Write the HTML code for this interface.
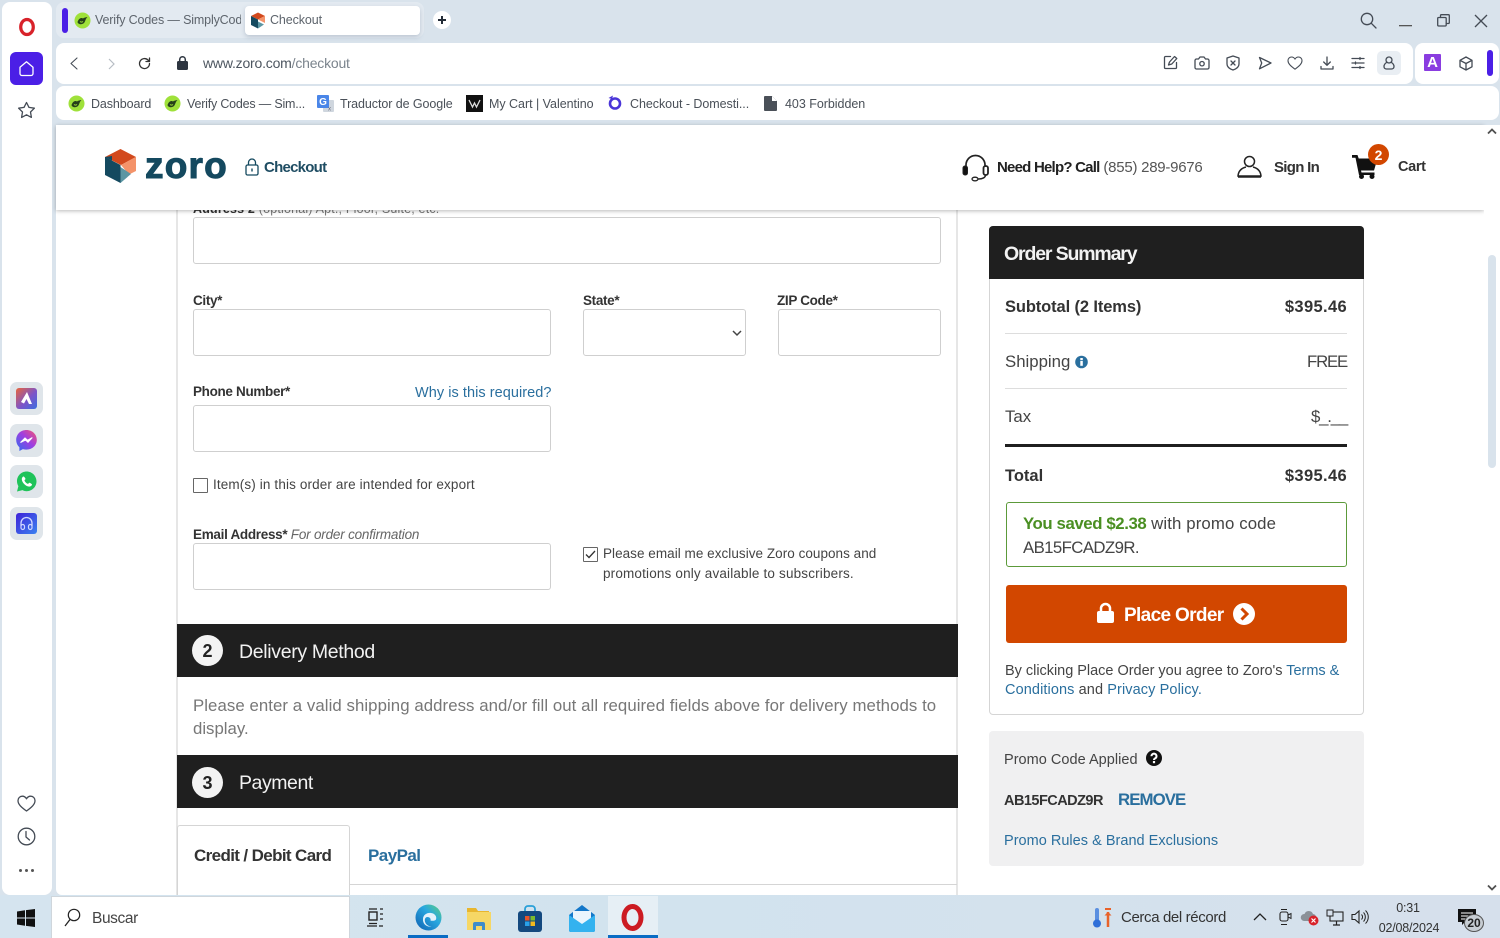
<!DOCTYPE html>
<html lang="en"><head><meta charset="utf-8"><title>Checkout</title>
<style>
*{box-sizing:border-box}
html,body{margin:0;padding:0;width:1500px;height:938px;overflow:hidden;background:#d9e3ec;font-family:"Liberation Sans",sans-serif;color:#333}
.a{position:absolute}
.t{position:absolute;white-space:nowrap;line-height:20px;height:20px}
svg{position:absolute;overflow:visible}
.b{font-weight:bold}
.in{position:absolute;background:#fff;border:1px solid #cfcfcf;border-radius:3px}
.lk{color:#2a6f9e}
.ic{fill:none;stroke:#444b55;stroke-width:1.3;stroke-linecap:round;stroke-linejoin:round}
.ch{font-size:12.5px;color:#5d646c;letter-spacing:-.1px}
.bk{font-size:12.5px;color:#4a5058;letter-spacing:-.1px}
.lb{font-size:13.5px;font-weight:bold;color:#333;letter-spacing:-.33px}
</style></head><body>

<!-- Opera sidebar -->
<div class="a" style="left:2px;top:2px;width:50px;height:893px;background:#fff;border-radius:8px"></div>
<svg style="left:17px;top:17px" width="20" height="20" viewBox="0 0 20 20"><ellipse cx="10" cy="10" rx="6.3" ry="7.5" fill="none" stroke="#d8222a" stroke-width="3.2"/></svg>
<div class="a" style="left:10px;top:52px;width:33px;height:33px;background:#4b1fe6;border-radius:6px"></div>
<svg style="left:18px;top:60px" width="17" height="17" viewBox="0 0 17 17"><path d="M2 7.2 8.5 1.8 15 7.2V13.5a2 2 0 0 1-2 2H4a2 2 0 0 1-2-2Z" fill="none" stroke="#fff" stroke-width="1.3" stroke-linejoin="round"/></svg>
<svg style="left:17px;top:101px" width="19" height="18" viewBox="0 0 19 18"><path class="ic" d="M9.5 1.5 12 6.4l5.4.8-3.9 3.8.9 5.4-4.9-2.6-4.9 2.6.9-5.4L1.6 7.2 7 6.4Z"/></svg>

<div class="a" style="left:10px;top:382px;width:33px;height:33px;background:#dfe5ea;border-radius:7px"></div>
<svg style="left:16px;top:388px" width="21" height="21" viewBox="0 0 21 21"><defs><linearGradient id="g1" x1="0" y1="0" x2="1" y2="1"><stop offset="0" stop-color="#e9653b"/><stop offset=".55" stop-color="#7d54c8"/><stop offset="1" stop-color="#3c6fe0"/></linearGradient></defs><rect width="21" height="21" rx="3" fill="url(#g1)"/><path d="M11 4 16 16h-3L10.500 11 8 15.500 5 14Z" fill="#fff"/></svg>
<div class="a" style="left:10px;top:424px;width:33px;height:33px;background:#dfe5ea;border-radius:7px"></div>
<svg style="left:16px;top:430px" width="21" height="21" viewBox="0 0 21 21"><defs><linearGradient id="g2" x1="0" y1="1" x2="1" y2="0"><stop offset="0" stop-color="#2e6df0"/><stop offset=".55" stop-color="#a13ee0"/><stop offset="1" stop-color="#f5566e"/></linearGradient></defs><path d="M10.500 0C4.700 0 .2 4.200.2 9.900c0 3 1.200 5.500 3.200 7.300V21l3.500-1.900c1.100.3 2.300.5 3.600.5 5.800 0 10.300-4.200 10.300-9.700S16.300 0 10.500 0Z" fill="url(#g2)"/><path d="M4.500 12.500 9 8l2.500 2.300L16.300 7.500 12 12.300 9.500 10Z" fill="#fff" stroke="#fff"/></svg>
<div class="a" style="left:10px;top:465px;width:33px;height:33px;background:#dfe5ea;border-radius:7px"></div>
<svg style="left:16px;top:471px" width="21" height="21" viewBox="0 0 21 21"><path d="M10.700.5C5.300.5 1 4.800 1 10.100c0 1.800.5 3.500 1.400 5L1 20.500l5.500-1.400c1.300.8 2.800 1.100 4.200 1.100 5.400 0 9.800-4.400 9.800-9.800S16.100.5 10.700.5Z" fill="#1fc35a"/><path d="M7.500 5.500c-.5 0-1.700 1-1.700 2.800 0 3 3.800 7.300 7.500 7.300 1.500 0 2.700-1.200 2.700-2.100 0-.5-2.200-1.700-2.600-1.700-.4 0-.9 1.100-1.400 1.100-1 0-3.500-2.300-3.500-3.500 0-.5 1-1 1-1.400 0-.5-1.200-2.500-2-2.500Z" fill="#fff"/></svg>
<div class="a" style="left:10px;top:507px;width:33px;height:33px;background:#dfe5ea;border-radius:7px"></div>
<svg style="left:16px;top:513px" width="21" height="21" viewBox="0 0 21 21"><defs><linearGradient id="g3" x1="0" y1="0" x2="1" y2="1"><stop offset="0" stop-color="#3f22d8"/><stop offset="1" stop-color="#3a82f0"/></linearGradient></defs><rect width="21" height="21" rx="3" fill="url(#g3)"/><path d="M5 13V10a5.500 5.500 0 0 1 11 0v3" fill="none" stroke="#cfd6ff" stroke-width="1.300"/><rect x="5" y="11.500" width="3.500" height="5" rx="1.700" fill="none" stroke="#cfd6ff" stroke-width="1.200"/><rect x="12.500" y="11.500" width="3.500" height="5" rx="1.700" fill="none" stroke="#cfd6ff" stroke-width="1.200"/></svg>

<svg style="left:17px;top:795px" width="19" height="17" viewBox="0 0 19 17"><path class="ic" d="M9.500 16C4 12 1 9.200 1 5.600 1 3 3 1.200 5.300 1.200c1.800 0 3.300 1 4.200 2.600C10.400 2.200 11.900 1.200 13.700 1.200 16 1.200 18 3 18 5.600 18 9.200 15 12 9.500 16Z"/></svg>
<svg style="left:17px;top:827px" width="19" height="19" viewBox="0 0 19 19"><circle class="ic" cx="9.500" cy="9.500" r="8.300"/><path class="ic" d="M9 4.500V10l3.500 3"/></svg>
<div class="a" style="left:19px;top:869px;width:3px;height:3px;background:#555;border-radius:50%"></div>
<div class="a" style="left:25px;top:869px;width:3px;height:3px;background:#555;border-radius:50%"></div>
<div class="a" style="left:31px;top:869px;width:3px;height:3px;background:#555;border-radius:50%"></div>

<!-- Tabs -->
<div class="a" style="left:56px;top:2px;width:368px;height:36px;background:#e3eaf1;border-radius:8px"></div>
<div class="a" style="left:62px;top:8px;width:6px;height:25px;background:#4b1fe6;border-radius:3px"></div>
<svg style="left:74px;top:12px" width="17" height="17" viewBox="0 0 17 17"><circle cx="8.500" cy="8.500" r="8" fill="#9fe13a"/><path d="M3.500 10c.5 2.500 4.500 3 6.500 1 1.500-1.500 1-3.500 3.500-6-2 .5-3.500.5-4.500 1.500C7.500 5.500 5 6 3.500 10Z" fill="#26401a"/><path d="M6 9.500c1 .8 2 .8 3 0" stroke="#9fe13a" fill="none"/></svg>
<div class="t ch" style="left:95px;top:10px;width:146px;overflow:hidden;letter-spacing:-.15px">Verify Codes — SimplyCodes</div>
<div class="a" style="left:245px;top:6px;width:175px;height:29px;background:#fff;border-radius:4px;box-shadow:0 2px 5px rgba(70,90,120,.25)"></div>
<svg style="left:250px;top:12px" width="16" height="17" viewBox="0 0 32 34"><path d="M16 1 30 8 16 15 2 8Z" fill="#d2491d"/><path d="M2 8 16 15V33L2 26Z" fill="#14495f"/><path d="M16 15 30 8V22L16 15Z" fill="#f4936a"/><path d="M16 19 28 25 16 33Z" fill="#5b96a3"/></svg>
<div class="t ch" style="left:270px;top:10px">Checkout</div>
<div class="a" style="left:433px;top:11px;width:18px;height:18px;background:#fff;border-radius:50%"></div>
<svg style="left:437px;top:15px" width="10" height="10"><path d="M5 1v8M1 5h8" stroke="#222b36" stroke-width="2"/></svg>

<!-- Window controls -->
<svg style="left:1360px;top:12px" width="17" height="17" viewBox="0 0 17 17"><circle class="ic" cx="7" cy="7" r="5.700"/><path class="ic" d="m11.200 11.200 4.800 4.800"/></svg>
<svg style="left:1399px;top:25px" width="13" height="2"><rect width="13" height="1.300" fill="#555"/></svg>
<svg style="left:1437px;top:14px" width="13" height="13" viewBox="0 0 13 13"><rect class="ic" x=".7" y="3.500" width="8.500" height="8.500" rx="1"/><path class="ic" d="M3.500 3.500V1.700a1 1 0 0 1 1-1h6.800a1 1 0 0 1 1 1v6.800a1 1 0 0 1-1 1H9.200"/></svg>
<svg style="left:1474px;top:14px" width="14" height="14"><path d="M1 1l12 12M13 1 1 13" stroke="#444b55" stroke-width="1.300"/></svg>

<!-- Address bar -->
<div class="a" style="left:56px;top:43px;width:1357px;height:41px;background:#fff;border-radius:8px"></div>
<div class="a" style="left:1415px;top:43px;width:84px;height:41px;background:#fff;border-radius:8px"></div>
<svg style="left:69px;top:57px" width="9" height="13"><path class="ic" d="M8 1 2 6.500 8 12" style="stroke-width:1.100"/></svg>
<svg style="left:108px;top:58px" width="8" height="12"><path d="M1 1l5 5-5 5" fill="none" stroke="#b7bdc4" stroke-width="1.200"/></svg>
<svg style="left:138px;top:57px" width="13" height="13" viewBox="0 0 13 13"><path class="ic" style="stroke:#333" d="M11.500 6.500a5 5 0 1 1-1.500-3.500l1.500 1.500M11.500 1v3.500H8"/></svg>
<svg style="left:177px;top:56px" width="11" height="14" viewBox="0 0 11 14"><rect y="5" width="11" height="9" rx="1.500" fill="#2d3540"/><path d="M2.700 6V3.500a2.800 2.800 0 0 1 5.600 0V6" fill="none" stroke="#2d3540" stroke-width="1.500"/></svg>
<div class="t" style="left:203px;top:53px;font-size:14px;letter-spacing:-.2px;color:#7b848d"><span style="color:#4d5660">www.zoro.com</span>/checkout</div>

<!-- Toolbar icons -->
<svg style="left:1163px;top:55px" width="15" height="15" viewBox="0 0 15 15"><path class="ic" d="M13.500 7.500v5a1 1 0 0 1-1 1h-10a1 1 0 0 1-1-1v-10a1 1 0 0 1 1-1h5"/><path class="ic" d="M5.500 10l1-3 5-5.500 2.300 2-5 5.500Z"/></svg>
<svg style="left:1194px;top:56px" width="16" height="14" viewBox="0 0 16 14"><path class="ic" d="M1 4.500a1.500 1.500 0 0 1 1.500-1.500h2L6 1h4l1.500 2h2A1.500 1.500 0 0 1 15 4.500v7a1.500 1.500 0 0 1-1.500 1.500h-11A1.500 1.500 0 0 1 1 11.500Z"/><circle class="ic" cx="8" cy="7.700" r="2.200"/></svg>
<svg style="left:1226px;top:55px" width="14" height="16" viewBox="0 0 14 16"><path class="ic" d="M7 1 13 3v6c0 3-3 5-6 6-3-1-6-3-6-6V3Z"/><path class="ic" d="m5 6 4 4M9 6l-4 4"/></svg>
<svg style="left:1258px;top:56px" width="14" height="14" viewBox="0 0 14 14"><path class="ic" d="M1.500 1.500 13 7 1.500 12.800 3.700 7Z"/></svg>
<svg style="left:1287px;top:56px" width="16" height="14" viewBox="0 0 19 17"><path class="ic" d="M9.500 16C4 12 1 9.200 1 5.600 1 3 3 1.200 5.300 1.200c1.800 0 3.300 1 4.200 2.600C10.400 2.200 11.900 1.200 13.700 1.200 16 1.200 18 3 18 5.600 18 9.200 15 12 9.500 16Z"/></svg>
<svg style="left:1320px;top:56px" width="14" height="14" viewBox="0 0 14 14"><path class="ic" d="M7 1v8M3.700 6 7 9.300 10.300 6M1 10.500V13h12v-2.500"/></svg>
<svg style="left:1351px;top:57px" width="14" height="12" viewBox="0 0 14 12"><path class="ic" d="M1 1.500h12M1 6h12M1 10.500h12M9 0.500v2M4.500 5v2M9 9.500v2"/></svg>
<div class="a" style="left:1377px;top:51px;width:24px;height:24px;background:#e9eef3;border-radius:5px"></div>
<svg style="left:1383px;top:56px" width="12" height="14" viewBox="0 0 12 14"><circle class="ic" cx="6" cy="4" r="3"/><path class="ic" d="M3.500 6.500C2 7.500 1 8.700 1 10.500 1 12 2 13 3.500 13h5C10 13 11 12 11 10.500c0-1.800-1-3-2.500-4"/></svg>
<div class="a" style="left:1424px;top:54px;width:17px;height:17px;background:#8a3ce0;border-radius:1px"></div>
<div class="t b" style="left:1424px;top:53px;width:17px;text-align:center;font-size:15px;color:#fff">A</div>
<svg style="left:1459px;top:56px" width="14" height="15" viewBox="0 0 14 15"><path class="ic" d="M7 1 13 4.300v6.500L7 14 1 10.800V4.300ZM1 4.300 7 7.500 13 4.300M7 7.500V14"/></svg>
<div class="a" style="left:1487px;top:50px;width:6px;height:26px;background:#4b1fe6;border-radius:3px"></div>

<!-- Bookmarks -->
<div class="a" style="left:56px;top:86px;width:1443px;height:34px;background:#fff;border-radius:8px"></div>
<svg style="left:68px;top:95px" width="17" height="17" viewBox="0 0 17 17"><circle cx="8.500" cy="8.500" r="8" fill="#9fe13a"/><path d="M3.500 10c.5 2.500 4.500 3 6.500 1 1.500-1.500 1-3.500 3.500-6-2 .5-3.500.5-4.500 1.500C7.500 5.500 5 6 3.500 10Z" fill="#26401a"/><path d="M6 9.500c1 .8 2 .8 3 0" stroke="#9fe13a" fill="none"/></svg>
<div class="t bk" style="left:91px;top:94px">Dashboard</div>
<svg style="left:164px;top:95px" width="17" height="17" viewBox="0 0 17 17"><circle cx="8.500" cy="8.500" r="8" fill="#9fe13a"/><path d="M3.500 10c.5 2.500 4.500 3 6.500 1 1.500-1.500 1-3.500 3.500-6-2 .5-3.500.5-4.500 1.500C7.500 5.500 5 6 3.500 10Z" fill="#26401a"/><path d="M6 9.500c1 .8 2 .8 3 0" stroke="#9fe13a" fill="none"/></svg>
<div class="t bk" style="left:187px;top:94px;letter-spacing:-.2px">Verify Codes — Sim...</div>
<svg style="left:317px;top:95px" width="17" height="17" viewBox="0 0 17 17"><rect x="6" y="5" width="11" height="12" rx="1" fill="#cfd6de"/><rect width="12" height="13" rx="1" fill="#4a86e8"/><text x="6" y="10" font-size="10" font-weight="bold" text-anchor="middle" fill="#fff" font-family="Liberation Sans">G</text><text x="12.500" y="15.500" font-size="6" text-anchor="middle" fill="#667" font-family="Liberation Sans">x</text></svg>
<div class="t bk" style="left:340px;top:94px;letter-spacing:-.08px">Traductor de Google</div>
<div class="a" style="left:466px;top:95px;width:17px;height:17px;background:#111"></div>
<svg style="left:466px;top:95px" width="17" height="17"><path d="M3 5l3.500 7L8.500 8 10.500 12 14 5" fill="none" stroke="#ddd" stroke-width="1.300"/></svg>
<div class="t bk" style="left:489px;top:94px;letter-spacing:-.03px">My Cart | Valentino</div>
<svg style="left:607px;top:95px" width="15" height="16" viewBox="0 0 15 16"><circle cx="8" cy="8.500" r="5" fill="none" stroke="#4a35d8" stroke-width="2.600"/><path d="M1.500 3 6 .5 5 4Z" fill="#4a35d8"/></svg>
<div class="t bk" style="left:630px;top:94px;letter-spacing:-.05px">Checkout - Domesti...</div>
<svg style="left:764px;top:96px" width="13" height="15" viewBox="0 0 13 15"><path d="M1 0h7l5 5v9a1 1 0 0 1-1 1H1a1 1 0 0 1-1-1V1a1 1 0 0 1 1-1Z" fill="#4a5058"/><path d="M8 0v5h5" fill="#fff"/></svg>
<div class="t bk" style="left:785px;top:94px;letter-spacing:-.03px">403 Forbidden</div>

<!-- Page -->
<div class="a" style="left:56px;top:125px;width:1444px;height:770px;background:#fff;border-radius:6px 0 0 6px;overflow:hidden">
</div>

<!-- Form column borders -->
<div class="a" style="left:176px;top:205px;width:2px;height:690px;background:#e6e6e6"></div>
<div class="a" style="left:956px;top:205px;width:2px;height:690px;background:#e6e6e6"></div>

<div class="t" style="left:193px;top:199px;font-size:12.500px;letter-spacing:.18px;color:#777"><b style="color:#333">Address 2</b> (optional) Apt., Floor, Suite, etc.</div>
<div class="in" style="left:193px;top:217px;width:748px;height:47px"></div>

<div class="t lb" style="left:193px;top:291px">City*</div>
<div class="in" style="left:193px;top:309px;width:358px;height:47px"></div>
<div class="t lb" style="left:583px;top:291px">State*</div>
<div class="in" style="left:583px;top:309px;width:163px;height:47px"></div>
<svg style="left:732px;top:330px" width="10" height="6"><path d="M1 1l4 4 4-4" fill="none" stroke="#444" stroke-width="1.500"/></svg>
<div class="t lb" style="left:777px;top:291px">ZIP Code*</div>
<div class="in" style="left:778px;top:309px;width:163px;height:47px"></div>

<div class="t lb" style="left:193px;top:382px">Phone Number*</div>
<div class="t lk" style="left:415px;top:383px;font-size:14.500px;letter-spacing:.05px">Why is this required?</div>
<div class="in" style="left:193px;top:405px;width:358px;height:47px"></div>

<div class="a" style="left:193px;top:478px;width:15px;height:15px;background:#fff;border:1px solid #666;border-radius:1px"></div>
<div class="t" style="left:213px;top:475px;font-size:13.500px;letter-spacing:.13px;color:#444">Item(s) in this order are intended for export</div>

<div class="t" style="left:193px;top:525px;font-size:13.500px;letter-spacing:-.3px;color:#333"><b>Email Address*</b> <i style="color:#666;letter-spacing:-.2px">For order confirmation</i></div>
<div class="in" style="left:193px;top:543px;width:358px;height:47px"></div>

<div class="a" style="left:583px;top:547px;width:15px;height:15px;background:#fff;border:1px solid #666;border-radius:1px"></div>
<svg style="left:585px;top:550px" width="11" height="9"><path d="M1 4.500 4 7.500 10 1" fill="none" stroke="#333" stroke-width="1.300"/></svg>
<div class="t" style="left:603px;top:544px;font-size:13.500px;letter-spacing:.04px;color:#444">Please email me exclusive Zoro coupons and</div>
<div class="t" style="left:603px;top:564px;font-size:13.500px;letter-spacing:.17px;color:#444">promotions only available to subscribers.</div>

<!-- Delivery -->
<div class="a" style="left:177px;top:624px;width:781px;height:53px;background:#1f1f1f"></div>
<div class="a" style="left:192px;top:635px;width:31px;height:31px;background:#f3f3f3;border-radius:50%"></div>
<div class="t b" style="left:192px;top:641px;width:31px;text-align:center;font-size:18px;color:#222">2</div>
<div class="t" style="left:239px;top:642px;font-size:19.500px;letter-spacing:-.33px;color:#f2f2f2">Delivery Method</div>
<div class="t" style="left:193px;top:696px;font-size:16.800px;letter-spacing:.07px;color:#777">Please enter a valid shipping address and/or fill out all required fields above for delivery methods to</div>
<div class="t" style="left:193px;top:719px;font-size:16.800px;color:#777">display.</div>

<!-- Payment -->
<div class="a" style="left:177px;top:755px;width:781px;height:53px;background:#1f1f1f"></div>
<div class="a" style="left:192px;top:767px;width:31px;height:31px;background:#f3f3f3;border-radius:50%"></div>
<div class="t b" style="left:192px;top:773px;width:31px;text-align:center;font-size:18px;color:#222">3</div>
<div class="t" style="left:239px;top:773px;font-size:19.500px;letter-spacing:-.45px;color:#f2f2f2">Payment</div>

<div class="a" style="left:349px;top:884px;width:608px;height:1px;background:#d5d5d5"></div>
<div class="a" style="left:177px;top:825px;width:173px;height:70px;background:#fff;border:1px solid #d5d5d5;border-bottom:0;border-radius:3px 3px 0 0"></div>
<div class="t b" style="left:194px;top:846px;font-size:17px;letter-spacing:-.63px;color:#333">Credit / Debit Card</div>
<div class="t b lk" style="left:368px;top:846px;font-size:17px;letter-spacing:-.55px">PayPal</div>

<!-- Order Summary -->
<div class="a" style="left:989px;top:226px;width:375px;height:489px;background:#fff;border:1px solid #d5d5d5;border-radius:4px"></div>
<div class="a" style="left:989px;top:226px;width:375px;height:53px;background:#1f1f1f;border-radius:4px 4px 0 0"></div>
<div class="t b" style="left:1004px;top:244px;font-size:19.500px;letter-spacing:-1.15px;color:#f2f2f2">Order Summary</div>
<div class="t b" style="left:1005px;top:297px;font-size:16.500px;letter-spacing:-.12px;color:#333">Subtotal (2 Items)</div>
<div class="t b" style="left:1247px;top:297px;width:100px;text-align:right;font-size:16.500px;letter-spacing:.35px;color:#333">$395.46</div>
<div class="a" style="left:1005px;top:333px;width:342px;height:1px;background:#ddd"></div>
<div class="t" style="left:1005px;top:352px;font-size:16.800px;color:#444">Shipping</div>
<svg style="left:1075px;top:355px" width="13" height="14" viewBox="0 0 13 14"><circle cx="6.500" cy="7" r="6.300" fill="#2a6f9e"/><rect x="5.300" y="5.800" width="2.500" height="5" fill="#fff"/><rect x="5.300" y="3" width="2.500" height="2" fill="#fff"/></svg>
<div class="t" style="left:1247px;top:352px;width:100px;text-align:right;font-size:16.800px;letter-spacing:-1.2px;color:#444">FREE</div>
<div class="a" style="left:1005px;top:388px;width:342px;height:1px;background:#ddd"></div>
<div class="t" style="left:1005px;top:407px;font-size:16.800px;color:#444">Tax</div>
<div class="t" style="left:1247px;top:407px;width:100px;text-align:right;font-size:16.800px;letter-spacing:-1.2px;color:#444">$_.__</div>
<div class="a" style="left:1005px;top:444px;width:342px;height:3px;background:#1f1f1f"></div>
<div class="t b" style="left:1005px;top:466px;font-size:16.500px;color:#333">Total</div>
<div class="t b" style="left:1247px;top:466px;width:100px;text-align:right;font-size:16.500px;letter-spacing:.35px;color:#333">$395.46</div>

<div class="a" style="left:1006px;top:502px;width:341px;height:65px;border:1.500px solid #5c9a3a;border-radius:3px"></div>
<div class="t" style="left:1023px;top:514px;font-size:16.800px;letter-spacing:.12px;color:#444"><b style="color:#4a8f22;letter-spacing:-.4px">You saved $2.38</b> with promo code</div>
<div class="t" style="left:1023px;top:538px;font-size:16.800px;letter-spacing:-.6px;color:#444">AB15FCADZ9R.</div>

<div class="a" style="left:1006px;top:585px;width:341px;height:58px;background:#d24700;border-radius:3px"></div>
<svg style="left:1097px;top:603px" width="18" height="20" viewBox="0 0 18 20"><rect y="8" width="17" height="12" rx="2" fill="#fff"/><path d="M4 9V5.500a4.500 4.500 0 0 1 9 0V9" fill="none" stroke="#fff" stroke-width="2.500"/></svg>
<div class="t b" style="left:1124px;top:606px;font-size:19px;letter-spacing:-.65px;color:#fff">Place Order</div>
<svg style="left:1233px;top:603px" width="22" height="22" viewBox="0 0 22 22"><circle cx="11" cy="11" r="11" fill="#fff"/><path d="m8.500 5.500 5.500 5.500-5.500 5.500" fill="none" stroke="#d24700" stroke-width="3"/></svg>

<div class="t" style="left:1005px;top:661px;font-size:14.500px;letter-spacing:-.02px;color:#444">By clicking Place Order you agree to Zoro's <span class="lk">Terms &amp;</span></div>
<div class="t" style="left:1005px;top:680px;font-size:14.500px;letter-spacing:.1px;color:#444"><span class="lk">Conditions</span> and <span class="lk">Privacy Policy.</span></div>

<!-- Promo -->
<div class="a" style="left:989px;top:731px;width:375px;height:135px;background:#f0f0f1;border-radius:4px"></div>
<div class="t" style="left:1004px;top:750px;font-size:14.500px;letter-spacing:.03px;color:#444">Promo Code Applied</div>
<svg style="left:1146px;top:750px" width="16" height="16" viewBox="0 0 16 16"><circle cx="8" cy="8" r="8" fill="#111"/><path d="M5.500 6.200a2.500 2.500 0 1 1 3.800 2.100c-.9.500-1.300.9-1.300 1.700" fill="none" stroke="#fff" stroke-width="2"/><rect x="6.900" y="11" width="2.200" height="2.200" fill="#fff"/></svg>
<div class="t b" style="left:1004px;top:791px;font-size:14.500px;letter-spacing:-.53px;color:#333">AB15FCADZ9R</div>
<div class="t b lk" style="left:1118px;top:790px;font-size:16.800px;letter-spacing:-.9px">REMOVE</div>
<div class="t lk" style="left:1004px;top:831px;font-size:14.500px;letter-spacing:.02px">Promo Rules &amp; Brand Exclusions</div>

<!-- Site header -->
<div class="a" style="left:56px;top:125px;width:1428px;height:85px;background:#fff;box-shadow:0 1px 4px rgba(0,0,0,.28)"></div>
<svg style="left:105px;top:149px" width="31" height="34" viewBox="0 0 31 34"><path d="M15.500 0 31 8l-15 8L0 8Z" fill="#d2491d"/><path d="M0 8 7 11.500V7Z M0 8l15.500 8v18L0 26Z" fill="#14495f"/><path d="M16 16 31 8v14l-7 3.500-8-9.500Z" fill="#f4936a"/><path d="M15.500 18 26 25l-10.500 9Z" fill="#5b96a3"/></svg>
<div class="t b" style="left:145px;top:146px;height:40px;line-height:40px;font-size:37px;letter-spacing:1.2px;color:#14495f;-webkit-text-stroke:1px #14495f">zoro</div>
<svg style="left:245px;top:158px" width="14" height="18" viewBox="0 0 14 18"><rect x="1" y="7" width="12" height="10" rx="1.500" fill="none" stroke="#14495f" stroke-width="1.300"/><path d="M3.500 7V4.500a3.500 3.500 0 0 1 7 0V7" fill="none" stroke="#14495f" stroke-width="1.300"/><rect x="6.300" y="10.500" width="1.400" height="3" fill="#14495f"/></svg>
<div class="t b" style="left:264px;top:158px;font-size:15px;letter-spacing:-.75px;color:#1f4d63">Checkout</div>

<svg style="left:962px;top:154px" width="27" height="27" viewBox="0 0 27 27"><path d="M4 13V11a9.500 9.500 0 0 1 19 0v2" fill="none" stroke="#222" stroke-width="1.700"/><rect x="1" y="12" width="4.500" height="9" rx="2" fill="#111" stroke="#222" stroke-width="1"/><rect x="21.500" y="12" width="4.500" height="9" rx="2" fill="none" stroke="#222" stroke-width="1.800"/><path d="M23.500 21c0 2.500-3 4-7 4" fill="none" stroke="#222" stroke-width="1.500"/><ellipse cx="13" cy="25" rx="3" ry="1.800" fill="none" stroke="#222" stroke-width="1.300"/></svg>
<div class="t" style="left:997px;top:158px;font-size:15px;letter-spacing:-.25px;color:#555"><b style="color:#222;letter-spacing:-.78px">Need Help? Call</b> (855) 289-9676</div>
<svg style="left:1237px;top:155px" width="25" height="23" viewBox="0 0 25 23"><circle cx="12.500" cy="6.500" r="5" fill="none" stroke="#222" stroke-width="1.500"/><path d="M9 12c-4 1-7.500 3.500-8 9h23c-.5-5.500-4-8-8-9" fill="none" stroke="#222" stroke-width="1.500"/><path d="M1 22h23" stroke="#222" stroke-width="1.500"/></svg>
<div class="t b" style="left:1274px;top:158px;font-size:15px;letter-spacing:-.7px;color:#333">Sign In</div>
<svg style="left:1352px;top:155px" width="26" height="24" viewBox="0 0 26 24"><path d="M0 0h5.500l1.200 3.500H25.500L22 15.500H9l.5 2h13v2.500H7L3.500 2.800H0Z" fill="#111"/><circle cx="9.500" cy="21.500" r="2.500" fill="#111"/><circle cx="20" cy="21.500" r="2.500" fill="#111"/></svg>
<div class="a" style="left:1368px;top:144px;width:21px;height:21px;background:#d24700;border-radius:50%"></div>
<div class="t b" style="left:1368px;top:145px;width:21px;text-align:center;font-size:14px;color:#fff">2</div>
<div class="t b" style="left:1398px;top:157px;font-size:14.500px;letter-spacing:-.35px;color:#333">Cart</div>

<!-- Scrollbar -->
<div class="a" style="left:1484px;top:125px;width:16px;height:770px;background:#fff"></div>
<svg style="left:1487px;top:128px" width="10" height="7"><path d="M1 5.500 5 1.500l4 4" fill="none" stroke="#505050" stroke-width="1.800"/></svg>
<div class="a" style="left:1488px;top:255px;width:8px;height:213px;background:#d9e3ec;border-radius:4px"></div>
<svg style="left:1487px;top:884px" width="10" height="7"><path d="M1 1.500 5 5.500l4-4" fill="none" stroke="#505050" stroke-width="1.800"/></svg>

<!-- Taskbar -->
<div class="a" style="left:0;top:895px;width:1500px;height:43px;background:linear-gradient(90deg,#d5e4ef 0%,#d2e3ee 45%,#d6e0ec 100%)"></div>
<svg style="left:17px;top:909px" width="18" height="18" viewBox="0 0 18 18"><path d="M0 2.500 8 1.300V8.500H0ZM9 1.100 18 0V8.500H9ZM0 9.500H8V16.700L0 15.500ZM9 9.500h9V18L9 16.900Z" fill="#111"/></svg>
<div class="a" style="left:51px;top:896px;width:299px;height:42px;background:#fff;border:1px solid #cfd6dc;border-bottom:0"></div>
<svg style="left:64px;top:908px" width="17" height="19" viewBox="0 0 17 19"><circle cx="10" cy="7" r="5.700" fill="none" stroke="#222" stroke-width="1.200"/><path d="M6 11.500 1 18" stroke="#222" stroke-width="1.300"/></svg>
<div class="t" style="left:92px;top:909px;font-size:15.500px;letter-spacing:-.4px;color:#444">Buscar</div>
<svg style="left:366px;top:908px" width="18" height="19" viewBox="0 0 18 19"><path d="M3 1h8M3 15.500h8M14 1h3M14 6h3M14 11h3" stroke="#222" stroke-width="1.300"/><rect x="3" y="4" width="8" height="8" fill="none" stroke="#222" stroke-width="1.400"/><path d="M1 18h16" stroke="#222" stroke-width="1.200" stroke-dasharray="10 2"/></svg>
<svg style="left:415px;top:904px" width="27" height="27" viewBox="0 0 27 27"><defs><linearGradient id="e1" x1="0" y1="1" x2="1" y2="0"><stop offset="0" stop-color="#0f5fb0"/><stop offset=".6" stop-color="#29a8e0"/><stop offset="1" stop-color="#5fd07a"/></linearGradient></defs><circle cx="13.500" cy="13.500" r="13" fill="url(#e1)"/><path d="M8 15c0-4 4-6.500 8-6 4 .5 6 3.500 5 6.500-1 1.500-4 1.500-5.500 1 .5-1.500-.5-3.500-3-3.500s-3.500 3-2 6c1 2 3.500 3.500 6 3.500-5 1-9-3-8.500-7.500Z" fill="#e4f2fb"/></svg>
<div class="a" style="left:408px;top:935px;width:40px;height:3px;background:#0a6cc4"></div>
<svg style="left:467px;top:907px" width="24" height="23" viewBox="0 0 24 23"><path d="M0 1h9l2 3h11v4H0Z" fill="#e8b62e"/><rect y="5" width="24" height="18" fill="#f6d765"/><path d="M6 23v-6a2 2 0 0 1 2-2h8a2 2 0 0 1 2 2v6h-3v-4H9v4Z" fill="#3e8cc9"/></svg>
<svg style="left:518px;top:905px" width="24" height="27" viewBox="0 0 24 27"><path d="M7 7V4a3 3 0 0 1 3-3h4a3 3 0 0 1 3 3v3" fill="none" stroke="#2aa0d8" stroke-width="1.800"/><rect y="6" width="24" height="21" rx="3" fill="#14497f"/><rect x="7" y="11" width="4.500" height="4.500" fill="#e8552b"/><rect x="12.500" y="11" width="4.500" height="4.500" fill="#7dbb2e"/><rect x="7" y="16.500" width="4.500" height="4.500" fill="#2aa0e8"/><rect x="12.500" y="16.500" width="4.500" height="4.500" fill="#f2b91e"/></svg>
<svg style="left:569px;top:905px" width="26" height="27" viewBox="0 0 26 27"><path d="M13 0 26 10v15a2 2 0 0 1-2 2H2a2 2 0 0 1-2-2V10Z" fill="#1377c9"/><path d="M4 6h18v11l-9 5-9-5Z" fill="#eaf5fd"/><path d="M0 10 13 19 26 10v15a2 2 0 0 1-2 2H2a2 2 0 0 1-2-2Z" fill="#33b2ef"/></svg>
<div class="a" style="left:608px;top:896px;width:50px;height:42px;background:#e6eff5"></div>
<svg style="left:620px;top:904px" width="25" height="27" viewBox="0 0 25 27"><ellipse cx="12.500" cy="13.500" rx="8.500" ry="11" fill="none" stroke="#cc1b22" stroke-width="5"/></svg>
<div class="a" style="left:608px;top:935px;width:50px;height:3px;background:#0a6cc4"></div>

<svg style="left:1093px;top:908px" width="20" height="20" viewBox="0 0 20 20"><rect x="2" y="0" width="4" height="15" rx="2" fill="#5a8fe0"/><circle cx="4" cy="15.500" r="4" fill="#2f6fd8"/><path d="M12 1h6" stroke="#e8622a" stroke-width="2"/><path d="M15 4v15" stroke="#e8622a" stroke-width="2.500"/><path d="M11.500 7.500 15 3.800l3.500 3.700Z" fill="#e8622a"/></svg>
<div class="t" style="left:1121px;top:908px;font-size:15px;letter-spacing:-.37px;color:#333">Cerca del récord</div>
<svg style="left:1253px;top:912px" width="14" height="9"><path d="M1 8 7 2l6 6" fill="none" stroke="#222" stroke-width="1.300"/></svg>
<svg style="left:1279px;top:908px" width="13" height="18" viewBox="0 0 13 18"><rect x="1" y="4" width="8" height="9" rx="2" fill="none" stroke="#222" stroke-width="1.100"/><path d="M2 1.500h6M2 16.500h6" stroke="#222" stroke-width="1.100"/><path d="M9 7l3-1.500v5L9 9Z" fill="none" stroke="#222"/></svg>
<svg style="left:1301px;top:909px" width="18" height="17" viewBox="0 0 18 17"><path d="M3 12a3.500 3.500 0 0 1 .5-7A4.500 4.500 0 0 1 12 5a3 3 0 0 1 3 3v4Z" fill="#8b9198"/><circle cx="12.500" cy="11.500" r="5" fill="#d8232a"/><path d="m10.500 9.500 4 4m0-4-4 4" stroke="#fff" stroke-width="1.200"/></svg>
<svg style="left:1327px;top:910px" width="17" height="16" viewBox="0 0 17 16"><rect x="3" y="2" width="13" height="9" fill="none" stroke="#222" stroke-width="1.100"/><rect x="0" y="0" width="6" height="6" fill="#d6e0ec" stroke="#222"/><path d="M9.500 11v4M6 15h7" stroke="#222" stroke-width="1.200"/></svg>
<svg style="left:1351px;top:909px" width="17" height="16" viewBox="0 0 17 16"><path d="M1 5.500h3L8 2v12L4 10.500H1Z" fill="none" stroke="#222" stroke-width="1.100"/><path d="M10.500 5.500a3.500 3.500 0 0 1 0 5M12.500 3.500a6.500 6.500 0 0 1 0 9M14.500 1.500a9 9 0 0 1 0 13" fill="none" stroke="#222" stroke-width="1"/></svg>
<div class="t" style="left:1378px;top:898px;width:60px;text-align:center;font-size:12.500px;letter-spacing:-.2px;color:#333">0:31</div>
<div class="t" style="left:1378px;top:918px;width:62px;text-align:center;font-size:12.500px;letter-spacing:-.2px;color:#333">02/08/2024</div>
<svg style="left:1458px;top:909px" width="19" height="17" viewBox="0 0 19 17"><path d="M0 0h18v13H7l-3 3v-3H0Z" fill="#111"/><path d="M3 4h12M3 7h12M3 10h8" stroke="#fff"/></svg>
<div class="a" style="left:1464px;top:914px;width:20px;height:18px;background:#c7cdd3;border-radius:50%;border:1px solid #555"></div>
<div class="t b" style="left:1464px;top:914px;width:20px;text-align:center;font-size:12px;color:#222;line-height:19px">20</div>
</body></html>
